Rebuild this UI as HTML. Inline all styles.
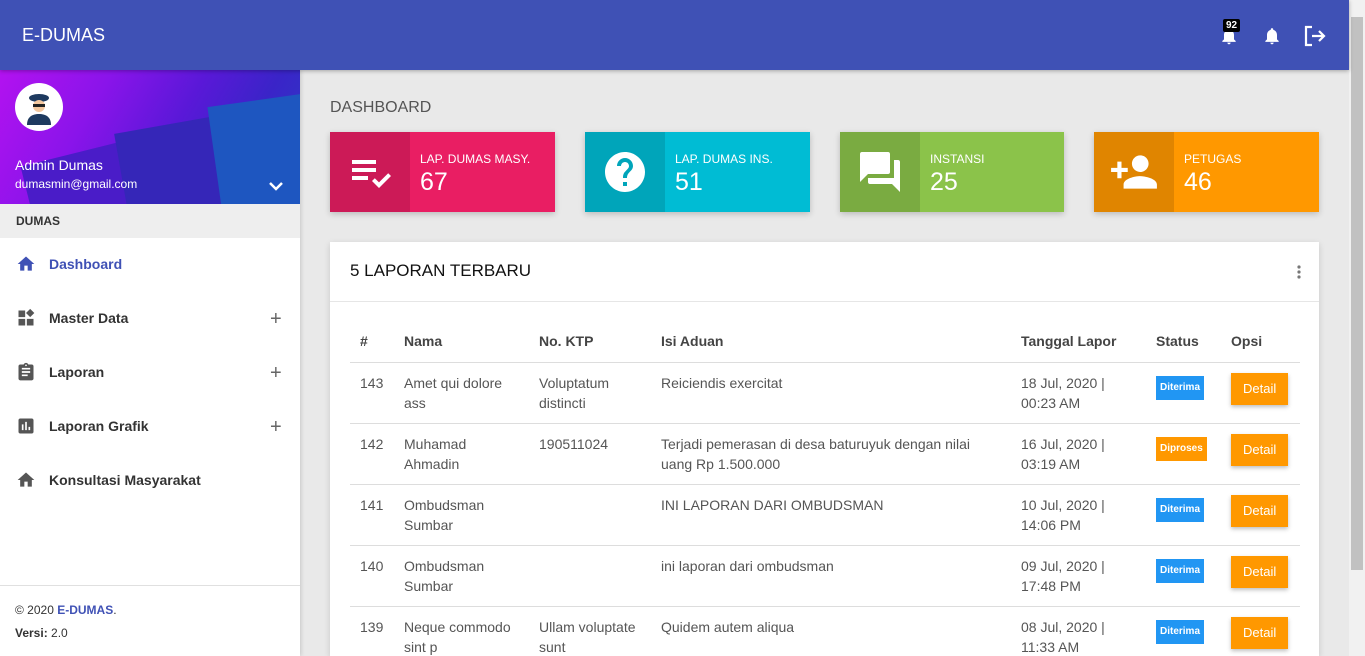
<!DOCTYPE html>
<html style="width:1365px;height:656px;overflow:hidden"><head><meta charset="utf-8"><style>
*{margin:0;padding:0;box-sizing:border-box}
html,body{width:1365px;height:656px;overflow:hidden}
body{background:#e9e9e9;font-family:"Liberation Sans",Roboto,sans-serif;position:relative;color:#333}
.top{position:absolute;left:0;top:0;width:1349px;height:70px;background:#3f51b5;box-shadow:0 1px 4px rgba(0,0,0,.3);z-index:2}
.top .brand{position:absolute;left:22px;top:25px;color:#fff;font-size:18px;font-weight:500}
.scroll{position:absolute;left:1349px;top:0;width:16px;height:656px;background:#f1f1f1}
.scroll div{position:absolute;left:2px;top:17px;width:12px;height:553px;background:#c1c1c1}
.side{position:absolute;left:0;top:70px;width:300px;height:586px;background:#fff;box-shadow:1px 0 4px rgba(0,0,0,.15);overflow:hidden}
.user{height:134px;background:linear-gradient(120deg,#b312f0 0%,#8a14ea 30%,#5a18d8 55%,#3a24c8 75%,#2a3fc4 100%);position:relative;overflow:hidden}
.av{position:absolute;left:15px;top:13px;width:48px;height:48px;border-radius:50%;background:#fff;overflow:hidden}
.uname{position:absolute;left:15px;top:87px;color:#fff;font-size:14px}
.umail{position:absolute;left:15px;top:107px;color:#fff;font-size:12px}
.hdr{height:34px;background:#eee;font-size:12px;font-weight:bold;padding:10px 16px;color:#333}
.menu div{height:54px;position:relative;font-size:14px;font-weight:bold;color:#333}
.menu span.t{position:absolute;left:49px;top:18px}
.menu svg{position:absolute;left:16px;top:16px}
.menu .p{position:absolute;left:270px;top:16px;font-size:20px;font-weight:normal;color:#666}
.foot{position:absolute;left:0;top:515px;width:300px;border-top:1px solid #e0e0e0;padding:13px 15px;font-size:12px;line-height:23px}
.title{position:absolute;left:330px;top:99px;font-size:16px;color:#555}
.stat{position:absolute;top:132px;height:80px;box-shadow:0 2px 6px rgba(0,0,0,.2);color:#fff}
.stat .ic{position:absolute;left:0;top:0;width:80px;height:80px;background:rgba(0,0,0,.12);display:flex;align-items:center;justify-content:center}
.stat .l{position:absolute;left:90px;top:20px;font-size:12px}
.stat .n{position:absolute;left:90px;top:36px;font-size:25px}
.card{position:absolute;left:330px;top:242px;width:989px;height:414px;background:#fff;box-shadow:0 2px 6px rgba(0,0,0,.15);overflow:hidden}
.card h2{font-weight:normal;font-size:17px;color:#111;position:absolute;left:20px;top:19px}
.card .hl{position:absolute;left:0;top:59px;width:100%;border-top:1px solid #e6e6e6}
table{position:absolute;left:20px;top:79px;width:950px;border-collapse:collapse;font-size:14px;color:#555}
th{text-align:left;font-weight:bold;color:#444;height:41px;padding:0 10px;border-bottom:1px solid #ddd}
td{vertical-align:top;padding:10px 10px 0;height:61px;line-height:20px;border-bottom:1px solid #ddd}
.b{display:inline-block;color:#fff;font-size:10px;font-weight:bold;padding:2px 4px;margin-top:3px}
.btn{display:inline-block;background:#ff9800;color:#fff;font-size:13px;padding:6px 12px;box-shadow:0 2px 4px rgba(0,0,0,.25);margin-top:0}
</style></head><body>
<div class="top"><div class="brand">E-DUMAS</div>
<svg style="position:absolute;left:1219px;top:26px" width="20" height="20" viewBox="0 0 24 24"><path fill="#fff" d="M12 22c1.1 0 2-.9 2-2h-4c0 1.1.9 2 2 2zm6-6v-5c0-3.1-1.6-5.6-4.5-6.3V4c0-.8-.7-1.5-1.5-1.5s-1.5.7-1.5 1.5v.7C7.6 5.4 6 7.9 6 11v5l-2 2v1h16v-1l-2-2z"/></svg>
<div style="position:absolute;left:1223px;top:19px;background:#000;color:#fff;font-size:10px;font-weight:bold;padding:1px 3px;border-radius:2px">92</div>
<svg style="position:absolute;left:1262px;top:26px" width="20" height="20" viewBox="0 0 24 24"><path fill="#fff" d="M12 22c1.1 0 2-.9 2-2h-4c0 1.1.9 2 2 2zm6-6v-5c0-3.1-1.6-5.6-4.5-6.3V4c0-.8-.7-1.5-1.5-1.5s-1.5.7-1.5 1.5v.7C7.6 5.4 6 7.9 6 11v5l-2 2v1h16v-1l-2-2z"/></svg>
<svg style="position:absolute;left:1303px;top:25px" width="24" height="22" viewBox="0 0 24 22"><path fill="none" stroke="#fff" stroke-width="2.2" d="M9 2H3v18h6M9 11h12M16 6l5 5-5 5"/></svg>
</div>
<div class="scroll"><div></div></div>
<div class="side">
<div class="user">
<div style="position:absolute;left:40px;top:55px;width:320px;height:200px;background:#4a1cc8;transform:rotate(-14deg)"></div>
<div style="position:absolute;left:130px;top:45px;width:200px;height:200px;background:#3526b8;transform:rotate(-10deg)"></div>
<div style="position:absolute;left:218px;top:28px;width:120px;height:160px;background:#1e56c0;transform:rotate(-8deg)"></div>
<div class="av"><svg width="48" height="48" viewBox="0 0 48 48"><ellipse cx="24" cy="15" rx="10" ry="4" fill="#1e3a5f"/><circle cx="24" cy="23" r="6" fill="#f4c8a0"/><rect x="18" y="21" width="12" height="3" fill="#222"/><path d="M12 42c0-8 5-11 12-11s12 3 12 11z" fill="#1e3a5f"/></svg></div>
<div class="uname">Admin Dumas</div><div class="umail">dumasmin@gmail.com</div>
<svg style="position:absolute;left:268px;top:110px" width="16" height="12" viewBox="0 0 16 12"><path d="M2 3l6 6 6-6" stroke="#fff" stroke-width="2.5" fill="none"/></svg>
</div>
<div class="hdr">DUMAS</div>
<div class="menu">
<div><svg width="20" height="20" viewBox="0 0 24 24"><path fill="#3f51b5" d="M10 20v-6h4v6h5v-8h3L12 3 2 12h3v8z"/></svg><span class="t" style="color:#3f51b5">Dashboard</span></div>
<div><svg width="20" height="20" viewBox="0 0 24 24"><path fill="#555" d="M3 3h8v8H3zM3 13h8v8H3zM13 13h8v8h-8zM17 1l5 5-5 5-5-5z"/></svg><span class="t">Master Data</span><span class="p">+</span></div>
<div><svg width="20" height="20" viewBox="0 0 24 24"><path fill="#555" d="M19 3h-4.2C14.4 1.8 13.3 1 12 1s-2.4.8-2.8 2H5c-1.1 0-2 .9-2 2v15c0 1.1.9 2 2 2h14c1.1 0 2-.9 2-2V5c0-1.1-.9-2-2-2zm-7 0c.6 0 1 .4 1 1s-.4 1-1 1-1-.4-1-1 .4-1 1-1zm2 14H7v-2h7v2zm3-4H7v-2h10v2zm0-4H7V7h10v2z"/></svg><span class="t">Laporan</span><span class="p">+</span></div>
<div><svg width="20" height="20" viewBox="0 0 24 24"><path fill="#555" d="M19 3H5c-1.1 0-2 .9-2 2v14c0 1.1.9 2 2 2h14c1.1 0 2-.9 2-2V5c0-1.1-.9-2-2-2zM9 17H7v-7h2v7zm4 0h-2V7h2v10zm4 0h-2v-4h2v4z"/></svg><span class="t">Laporan Grafik</span><span class="p">+</span></div>
<div><svg width="20" height="20" viewBox="0 0 24 24"><path fill="#555" d="M10 20v-6h4v6h5v-8h3L12 3 2 12h3v8z"/></svg><span class="t">Konsultasi Masyarakat</span></div>
</div>
<div class="foot">© 2020 <b style="color:#3f51b5">E-DUMAS</b>.<br><b>Versi:</b> 2.0</div>
</div>
<div class="title">DASHBOARD</div>
<div class="stat" style="left:330px;width:225px;background:#e91e63"><div class="ic"><svg width="48" height="48" viewBox="0 0 24 24"><path fill="#fff" d="M3 6h12v2H3zM3 10h12v2H3zM3 14h8v2H3zM13 16.5l1.4-1.4 2.1 2.1 4.6-4.6 1.4 1.4-6 6z"/></svg></div><div class="l">LAP. DUMAS MASY.</div><div class="n">67</div></div>
<div class="stat" style="left:585px;width:225px;background:#00bcd4"><div class="ic"><svg width="48" height="48" viewBox="0 0 24 24"><path fill="#fff" d="M12 2C6.5 2 2 6.5 2 12s4.5 10 10 10 10-4.5 10-10S17.5 2 12 2zm1 17h-2v-2h2v2zm2.1-7.8l-.9.9C13.5 12.9 13 13.5 13 15h-2v-.5c0-1.1.4-2.1 1.2-2.8l1.2-1.3c.4-.4.6-.9.6-1.4 0-1.1-.9-2-2-2s-2 .9-2 2H8c0-2.2 1.8-4 4-4s4 1.8 4 4c0 .9-.4 1.7-.9 2.2z"/></svg></div><div class="l">LAP. DUMAS INS.</div><div class="n">51</div></div>
<div class="stat" style="left:840px;width:224px;background:#8bc34a"><div class="ic"><svg width="48" height="48" viewBox="0 0 24 24"><path fill="#fff" d="M21 6h-2v9H6v2c0 .6.4 1 1 1h11l4 4V7c0-.6-.4-1-1-1zm-4 6V3c0-.6-.4-1-1-1H3c-.6 0-1 .4-1 1v14l4-4h10c.6 0 1-.4 1-1z"/></svg></div><div class="l">INSTANSI</div><div class="n">25</div></div>
<div class="stat" style="left:1094px;width:225px;background:#ff9800"><div class="ic"><svg width="50" height="50" viewBox="0 0 24 24"><path fill="#fff" d="M15 12c2.2 0 4-1.8 4-4s-1.8-4-4-4-4 1.8-4 4 1.8 4 4 4zm-9-2V7H4v3H1v2h3v3h2v-3h3v-2H6zm9 4c-2.7 0-8 1.3-8 4v2h16v-2c0-2.7-5.3-4-8-4z"/></svg></div><div class="l">PETUGAS</div><div class="n">46</div></div>
<div class="card"><h2>5 LAPORAN TERBARU</h2>
<svg style="position:absolute;left:966px;top:22px" width="6" height="16" viewBox="0 0 6 16"><circle cx="3" cy="3" r="1.6" fill="#777"/><circle cx="3" cy="8" r="1.6" fill="#777"/><circle cx="3" cy="13" r="1.6" fill="#777"/></svg>
<div class="hl"></div>
<table>
<colgroup><col style="width:44px"><col style="width:135px"><col style="width:122px"><col style="width:360px"><col style="width:135px"><col style="width:75px"><col></colgroup>
<tr><th>#</th><th>Nama</th><th>No. KTP</th><th>Isi Aduan</th><th>Tanggal Lapor</th><th>Status</th><th>Opsi</th></tr>
<tr><td>143</td><td>Amet qui dolore ass</td><td>Voluptatum distincti</td><td>Reiciendis exercitat</td><td>18 Jul, 2020 | 00:23 AM</td><td><span class="b" style="background:#2196f3">Diterima</span></td><td><span class="btn">Detail</span></td></tr>
<tr><td>142</td><td>Muhamad Ahmadin</td><td>190511024</td><td>Terjadi pemerasan di desa baturuyuk dengan nilai uang Rp 1.500.000</td><td>16 Jul, 2020 | 03:19 AM</td><td><span class="b" style="background:#ff9800">Diproses</span></td><td><span class="btn">Detail</span></td></tr>
<tr><td>141</td><td>Ombudsman Sumbar</td><td></td><td>INI LAPORAN DARI OMBUDSMAN</td><td>10 Jul, 2020 | 14:06 PM</td><td><span class="b" style="background:#2196f3">Diterima</span></td><td><span class="btn">Detail</span></td></tr>
<tr><td>140</td><td>Ombudsman Sumbar</td><td></td><td>ini laporan dari ombudsman</td><td>09 Jul, 2020 | 17:48 PM</td><td><span class="b" style="background:#2196f3">Diterima</span></td><td><span class="btn">Detail</span></td></tr>
<tr><td>139</td><td>Neque commodo sint p</td><td>Ullam voluptate sunt</td><td>Quidem autem aliqua</td><td>08 Jul, 2020 | 11:33 AM</td><td><span class="b" style="background:#2196f3">Diterima</span></td><td><span class="btn">Detail</span></td></tr>
</table></div>
</body></html>
